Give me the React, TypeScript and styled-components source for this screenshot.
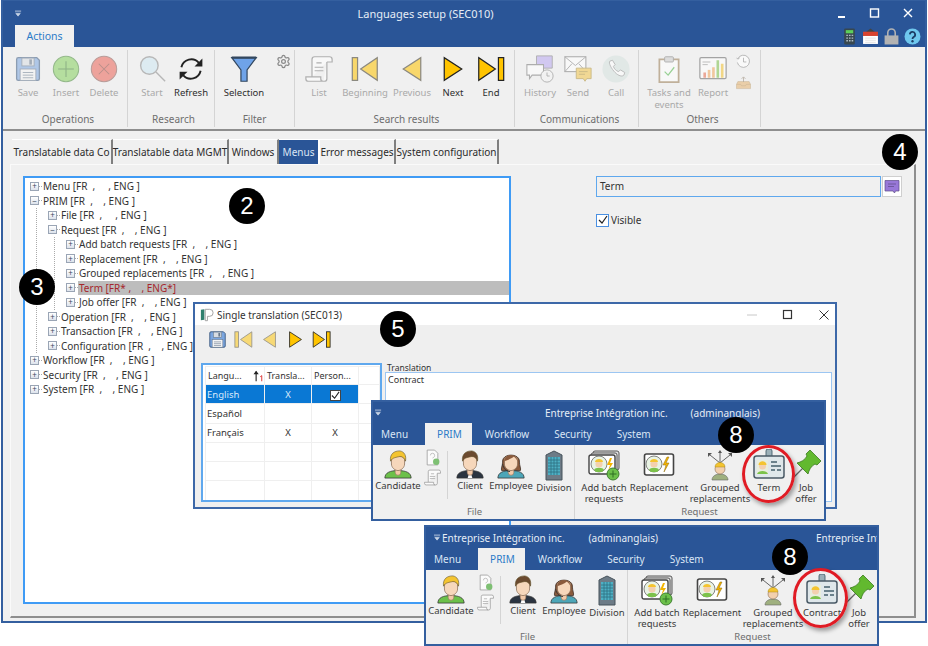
import { ReactNode } from 'react';
import styled, { createGlobalStyle } from 'styled-components';
import { Settings } from 'lucide-react';

const BLUE = '#2a5597';
const FONT = '"Noto Sans", "Open Sans", sans-serif';

//****************** icons ******************//

type IconProps = { size?: number };

function Svg({ size = 28, children }: IconProps & { children: ReactNode }) {
  return (
    <svg width={size} height={size} viewBox="0 0 32 32">
      {children}
    </svg>
  );
}

const SaveIcon = ({ size }: IconProps) => (
  <Svg size={size}>
    <path d="M3 5a2 2 0 0 1 2-2h21l3 3v21a2 2 0 0 1-2 2H5a2 2 0 0 1-2-2z" fill="#7ba6e0" stroke="#3c5a80" strokeWidth="1.5" />
    <rect x="9" y="3.5" width="14" height="9" fill="#d8dde3" stroke="#66778c" />
    <rect x="17.5" y="5" width="3" height="6" fill="#66778c" />
    <rect x="7" y="16" width="18" height="13" fill="#f5f5f5" stroke="#66778c" />
    <path d="M10 20h12M10 23h12M10 26h12" stroke="#66778c" />
  </Svg>
);

const PlusIcon = ({ size }: IconProps) => (
  <Svg size={size}>
    <circle cx="16" cy="16" r="14.5" fill="#86d05e" stroke="#4a8c3a" strokeWidth="1.2" />
    <path d="M16 7v18M7 16h18" stroke="#3f7f31" strokeWidth="1.2" />
  </Svg>
);

const CrossIcon = ({ size }: IconProps) => (
  <Svg size={size}>
    <circle cx="16" cy="16" r="14.5" fill="#ec6457" stroke="#8d5a54" strokeWidth="1.2" />
    <path d="M10 10l12 12M22 10L10 22" stroke="#8d4038" strokeWidth="1.2" />
  </Svg>
);

const SearchIcon = ({ size }: IconProps) => (
  <Svg size={size}>
    <circle cx="13" cy="12" r="10" fill="#cfe7f2" stroke="#8a8a8a" strokeWidth="1.6" />
    <path d="M20.5 19.5L31 30" stroke="#8a8a8a" strokeWidth="1.6" />
  </Svg>
);

const RefreshIcon = ({ size }: IconProps) => (
  <Svg size={size}>
    <path d="M5 14a11.5 11.5 0 0 1 20-5" fill="none" stroke="#222" strokeWidth="2.2" />
    <path d="M29 4v9h-9z" fill="#222" />
    <path d="M27 18a11.5 11.5 0 0 1-20 5" fill="none" stroke="#222" strokeWidth="2.2" />
    <path d="M3 28v-9h9z" fill="#222" />
  </Svg>
);

const FunnelIcon = ({ size }: IconProps) => (
  <Svg size={size}>
    <path d="M2 3h28L19.5 17v13h-7V17z" fill="#6fa3e8" stroke="#33475e" strokeWidth="1.4" />
    <path d="M2 3h28" stroke="#33475e" strokeWidth="2.6" />
  </Svg>
);

const ListIcon = ({ size }: IconProps) => (
  <Svg size={size}>
    <path d="M8 25V5a3 3 0 0 1 3-3h17a3 3 0 0 1 3 3v3h-6" fill="#fff" stroke="#7c7c7c" strokeWidth="1.4" />
    <path d="M25 8V27a3 3 0 0 1-3 3H4a3 3 0 0 1-3-3v-2h17v2a3 3 0 0 0 3 3" fill="#fff" stroke="#7c7c7c" strokeWidth="1.4" />
    <path d="M13 9h6M11 14h10M11 18h10" stroke="#7c7c7c" strokeWidth="1.2" />
  </Svg>
);

const FirstIcon = ({ size }: IconProps) => (
  <Svg size={size}>
    <rect x="1.5" y="3" width="6" height="26" fill="#ffc400" stroke="#3a3524" strokeWidth="1.4" />
    <path d="M30 3v26L11 16z" fill="#ffc400" stroke="#3a3524" strokeWidth="1.4" />
  </Svg>
);

const PrevIcon = ({ size }: IconProps) => (
  <Svg size={size}>
    <path d="M26 3v26L6 16z" fill="#ffc400" stroke="#3a3524" strokeWidth="1.4" />
  </Svg>
);

const NextIcon = ({ size }: IconProps) => (
  <Svg size={size}>
    <path d="M6 3v26l20-13z" fill="#ffc400" stroke="#222" strokeWidth="1.4" />
  </Svg>
);

const LastIcon = ({ size }: IconProps) => (
  <Svg size={size}>
    <path d="M2 3v26l19-13z" fill="#ffc400" stroke="#222" strokeWidth="1.4" />
    <rect x="24.5" y="3" width="6" height="26" fill="#ffc400" stroke="#222" strokeWidth="1.4" />
  </Svg>
);

const HistoryIcon = ({ size }: IconProps) => (
  <Svg size={size}>
    <path d="M12 1h18v14H16l-4 0z" fill="#b9a8f0" stroke="#777" />
    <path d="M1 11h19v12H7l-3 4v-4H1z" fill="#fff" stroke="#777" strokeWidth="1.2" />
    <circle cx="24" cy="24" r="7" fill="#f4f4f4" stroke="#777" />
    <path d="M24 20v4h3" fill="none" stroke="#777" />
  </Svg>
);

const SendIcon = ({ size }: IconProps) => (
  <Svg size={size}>
    <rect x="1" y="2" width="24" height="17" fill="#fff" stroke="#777" strokeWidth="1.2" />
    <path d="M1 2l12 10L25 2M1 19l8-9M25 19l-8-9" fill="none" stroke="#777" />
    <path d="M14 15h17v12h-5l-2 3-2-3h-8z" fill="#f2c64a" stroke="#a88a30" />
    <path d="M17 19h10M17 22h7" stroke="#a88a30" />
  </Svg>
);

const CallIcon = ({ size }: IconProps) => (
  <Svg size={size}>
    <circle cx="16" cy="16" r="15.5" fill="#d5e2df" />
    <path d="M9 7l3-1 3 5-2 2c1 3 3 5 6 6l2-2 5 3-1 3c-2 2-6 1-10-3S7 9 9 7z" fill="#fff" stroke="#888" />
  </Svg>
);

const TasksIcon = ({ size }: IconProps) => (
  <Svg size={size}>
    <rect x="5" y="5" width="22" height="26" fill="#fff" stroke="#9a7d55" strokeWidth="2" />
    <rect x="11" y="2" width="10" height="6" rx="1" fill="#ccc" stroke="#777" />
    <path d="M11 19l4 4 7-9" fill="none" stroke="#50b848" strokeWidth="1.4" />
  </Svg>
);

const ReportIcon = ({ size }: IconProps) => (
  <Svg size={size}>
    <rect x="1" y="3" width="30" height="24" rx="1.5" fill="#fff" stroke="#666" strokeWidth="1.4" />
    <path d="M4 8h9M4 11h6" stroke="#888" />
    <rect x="5" y="20" width="3" height="6" fill="#e76f51" />
    <rect x="10" y="17" width="3" height="9" fill="#f2a65a" />
    <rect x="15" y="14" width="3" height="12" fill="#f2a65a" />
    <rect x="20" y="6" width="3" height="20" fill="#7cc24a" />
    <rect x="25" y="10" width="3" height="16" fill="#f4c430" />
  </Svg>
);

const ClockIcon = ({ size }: IconProps) => (
  <Svg size={size}>
    <path d="M4 10a13 13 0 1 1-1 8" fill="#fff" stroke="#777" strokeWidth="1.6" />
    <path d="M16 8v9h6M1 8l3 3 4-3" fill="none" stroke="#777" strokeWidth="1.6" />
  </Svg>
);

const TrayIcon = ({ size }: IconProps) => (
  <Svg size={size}>
    <path d="M4 14h24l3 6v9H1v-9z" fill="#e7b97a" stroke="#a98755" />
    <path d="M1 20h9l2 3h8l2-3h9" fill="none" stroke="#a98755" />
    <path d="M16 15V5M12 8l4-4 4 4" fill="none" stroke="#8a7a66" strokeWidth="1.6" />
  </Svg>
);

const CalculatorIcon = () => (
  <Svg size={17}>
    <rect x="6" y="1" width="20" height="30" rx="2" fill="#37474f" />
    <rect x="9" y="4" width="14" height="6" fill="#5dd05a" />
    <path d="M10 14h3M15 14h3M20 14h3M10 19h3M15 19h3M20 19h3M10 24h3M15 24h3M20 24h3" stroke="#b0bec5" strokeWidth="2.4" />
  </Svg>
);

const CalendarIcon = () => (
  <Svg size={17}>
    <path d="M16 1L25 8H7z" fill="#444" />
    <rect x="2" y="7" width="28" height="8" fill="#d9432f" />
    <rect x="2" y="15" width="28" height="15" fill="#fff" />
    <path d="M6 19h20M6 23h20M6 27h20" stroke="#ccc" />
  </Svg>
);

const LockIcon = () => (
  <Svg size={17}>
    <path d="M9 15V9a7 7 0 0 1 14 0v6" fill="none" stroke="#b3b3b3" strokeWidth="3" />
    <rect x="3" y="14" width="26" height="17" fill="#b3b3b3" />
  </Svg>
);

const HelpIcon = () => (
  <Svg size={17}>
    <circle cx="16" cy="16" r="15" fill="#6fc8ee" />
    <path d="M11 12a5 5 0 1 1 7 5c-1.5 1-2 2-2 3.500" fill="none" stroke="#1c3d66" strokeWidth="3.4" />
    <circle cx="16" cy="25" r="2.200" fill="#1c3d66" />
  </Svg>
);

const BubbleIcon = () => (
  <Svg size={16}>
    <path d="M2 3h28v21h-7l-2 4-3-4H2z" fill="#9878d8" stroke="#5b4a86" strokeWidth="1.4" />
    <path d="M8 10h16M8 15h12" stroke="#5b4a86" strokeWidth="1.4" />
  </Svg>
);

const AppMark = () => (
  <Svg size={14}>
    <path d="M2 4l8-1v24l-8 1z" fill="#2f7f6d" />
    <path d="M12 3h10a8 8 0 0 1 0 16h-5v10h-5z" fill="#fff" stroke="#999" strokeWidth="2" />
  </Svg>
);

const SortMark = () => (
  <Svg size={12}>
    <path d="M11 4v26" stroke="#222" strokeWidth="3" />
    <path d="M4 11l7-9 7 9z" fill="#222" />
    <path d="M22 18l4-3v15" fill="none" stroke="#d33" strokeWidth="2.6" />
  </Svg>
);

// one bust, hair and clothes change from one person to the next
function Person({ hair, clothes, long, tie, headset, size = 30 }: { hair: string; clothes: string; long?: boolean; tie?: boolean; headset?: boolean; size?: number }) {
  return (
    <Svg size={size}>
      {long && <path d="M7 14C6 4 26 4 25 14c0 4 2 7 1 9H6c-1-2 1-5 1-9z" fill={hair} stroke="#3a2a20" strokeWidth=".8" />}
      <path d="M2 31c0-6 6-8 14-8s14 2 14 8z" fill={clothes} stroke="#333" strokeWidth=".8" />
      {tie && <path d="M13 23h6l-2 3 1.500 5h-5L15 26z" fill="#fff" />}
      <path d="M13 20h6v5a3 3 0 0 1-6 0z" fill="#f2c9a8" stroke="#8a6d55" strokeWidth=".6" />
      <path d="M9 11c0-5 14-5 14 0v5c0 4-4 7-7 7s-7-3-7-7z" fill="#f6d7bb" stroke="#8a6d55" strokeWidth=".8" />
      {!long && <path d="M8 13C7 5 12 2 18 2c5 1 7 5 6 11-1-3-3-5-6-5-4 1-8 1-10 5z" fill={hair} stroke="#5a4a20" strokeWidth=".6" />}
      {long && <path d="M9 13c3-1 8-3 10-5 2 2 3 3 4 5 0-8-14-9-14 0z" fill={hair} />}
      {headset && <path d="M7 16c1 5 4 8 8 8" fill="none" stroke="#333" strokeWidth="1" />}
    </Svg>
  );
}

const BuildingIcon = () => (
  <Svg size={32}>
    <path d="M8 6l8-4 8 4v25H8z" fill="#6d7b86" stroke="#47525b" />
    <rect x="10" y="8" width="12" height="18" fill="#4eb0c4" />
    <path d="M10 11h12M10 14h12M10 17h12M10 20h12M10 23h12M13 8v18M16 8v18M19 8v18" stroke="#2f6f80" strokeWidth=".8" />
  </Svg>
);

const Worker = () => (
  <>
    <circle cx="11" cy="15" r="8" fill="#e9f3e4" stroke="#666" strokeWidth=".8" />
    <path d="M6 21c1-3 9-3 10 0l-2 2H8z" fill="#7cc24a" />
    <circle cx="11" cy="15" r="3.600" fill="#f3d0ae" />
    <path d="M7 13c0-4 8-4 8 0z" fill="#f4c430" />
  </>
);

const ReplacementIcon = () => (
  <Svg size={32}>
    <rect x="1.500" y="5" width="29" height="21" rx="2" fill="#fff" stroke="#444" strokeWidth="1.6" />
    <Worker />
    <path d="M24 8l-4 8h3l-2 7 5-9h-3l3-6z" fill="#f4b400" stroke="#8a6a10" strokeWidth=".5" />
  </Svg>
);

const BatchIcon = () => (
  <Svg size={32}>
    <rect x="5" y="2" width="26" height="19" rx="2" fill="#ddd" stroke="#555" />
    <rect x="3" y="4" width="26" height="19" rx="2" fill="#eee" stroke="#555" />
    <rect x="1" y="6" width="26" height="19" rx="2" fill="#fff" stroke="#444" strokeWidth="1.400" />
    <Worker />
    <path d="M22 9l-3 7h3l-2 6 5-8h-3l2-5z" fill="#f4b400" />
    <circle cx="25" cy="25" r="6" fill="#6cc04a" stroke="#3f7f31" />
    <path d="M25 21.500v7M21.500 25h7" stroke="#2f6f25" />
  </Svg>
);

const GroupedIcon = () => (
  <Svg size={32}>
    <path d="M16 14V3M16 14L6 6M16 14L26 6" stroke="#555" strokeWidth=".9" />
    <path d="M14 4l2-3 2 3zM4 8l0-4 4 0zM28 8l0-4-4 0z" fill="#555" />
    <path d="M8 31c0-4 4-6 8-6s8 2 8 6z" fill="#9fb07f" stroke="#666" strokeWidth=".6" />
    <circle cx="16" cy="20" r="5" fill="#f3d0ae" stroke="#8a6d55" strokeWidth=".6" />
    <path d="M11 18c0-6 10-6 10 0z" fill="#f4c430" stroke="#a98a20" strokeWidth=".5" />
  </Svg>
);

const BadgeCardIcon = () => (
  <Svg size={32}>
    <rect x="13" y="0" width="6" height="9" rx="2" fill="#9bb0b8" stroke="#46606c" strokeWidth=".9" />
    <rect x="1" y="7" width="30" height="22" rx="2.500" fill="#dfe7ea" stroke="#4a5a66" strokeWidth="1.500" />
    <rect x="4" y="11" width="11" height="14" fill="#e8eddc" />
    <circle cx="9.500" cy="17" r="3.500" fill="#f3d0ae" />
    <path d="M5.500 16c0-5 8-5 8 0z" fill="#f4c430" />
    <path d="M4 25c1-4 10-4 11 0z" fill="#7cc24a" />
    <path d="M18 13h6M18 17h10M18 21h4M24 21h4" stroke="#46606c" strokeWidth="1.300" />
  </Svg>
);

const PinIcon = () => (
  <Svg size={32}>
    <path d="M14 18L2 30" stroke="#666" strokeWidth="1.200" />
    <path d="M7 14c4-1 8-3 10-7l-1-2 4-4 11 11-4 4-2-1c-4 2-6 6-7 10z" fill="#62b92f" stroke="#3a7a1e" strokeWidth=".8" />
  </Svg>
);

const ClientDoc = () => (
  <Svg size={17}>
    <path d="M6 2h14l6 6v22H6z" fill="#fff" stroke="#777" strokeWidth="1.400" />
    <path d="M12 12a4 4 0 0 1 8 0c0 2-1 4-4 5" fill="none" stroke="#777" />
    <circle cx="23" cy="24" r="6" fill="#59b04a" />
  </Svg>
);

const MiniScroll = () => <ListIcon size={17} />;

//****************** data ******************//

type TreeItem = { label: string; selected?: boolean; open?: boolean; items?: TreeItem[] };

const TREE: TreeItem[] = [
  { label: 'Menu [FR  ,     , ENG ]' },
  {
    label: 'PRIM [FR  ,    , ENG ]',
    open: true,
    items: [
      { label: 'File [FR  ,     , ENG ]' },
      {
        label: 'Request [FR  ,    , ENG ]',
        open: true,
        items: [
          { label: 'Add batch requests [FR  ,    , ENG ]' },
          { label: 'Replacement [FR  ,    , ENG ]' },
          { label: 'Grouped replacements [FR  ,    , ENG ]' },
          { label: 'Term [FR* ,    , ENG*]', selected: true },
          { label: 'Job offer [FR  ,    , ENG ]' },
        ],
      },
      { label: 'Operation [FR  ,    , ENG ]' },
      { label: 'Transaction [FR  ,    , ENG ]' },
      { label: 'Configuration [FR  ,    , ENG ]' },
    ],
  },
  { label: 'Workflow [FR  ,    , ENG ]' },
  { label: 'Security [FR  ,    , ENG ]' },
  { label: 'System [FR  ,    , ENG ]' },
];

const PAGE_TABS = [
  { label: 'Translatable data Co', width: 101 },
  { label: 'Translatable data MGMT', width: 116 },
  { label: 'Windows', width: 50 },
  { label: 'Menus', width: 41, active: true },
  { label: 'Error messages', width: 76 },
  { label: 'System configuration', width: 103 },
];

const LANGUAGES = [
  { name: 'English', translated: 'X', personal: 'check', selected: true },
  { name: 'Español', translated: '', personal: '' },
  { name: 'Français', translated: 'X', personal: 'X' },
  { name: '', translated: '', personal: '' },
  { name: '', translated: '', personal: '' },
  { name: '', translated: '', personal: '' },
];

//****************** small parts ******************//

function RibbonButton({ width, label, disabled, children }: { width: number; label: ReactNode; disabled?: boolean; children: ReactNode }) {
  return (
    <ToolButton $width={width} $disabled={disabled}>
      <ToolIcon $disabled={disabled}>{children}</ToolIcon>
      <span>{label}</span>
    </ToolButton>
  );
}

function TreeNode({ item }: { item: TreeItem }) {
  return (
    <li>
      <TreeRow>
        <Expander>{item.open ? '−' : '+'}</Expander>
        <Dash />
        <TreeLabel $selected={item.selected}>{item.label}</TreeLabel>
      </TreeRow>
      {item.items && (
        <Branch>
          {item.items.map((child) => (
            <TreeNode key={child.label} item={child} />
          ))}
        </Branch>
      )}
    </li>
  );
}

function WindowControls() {
  return (
    <Controls>
      <svg width="12" height="12" viewBox="0 0 12 12"><rect x="2" y="9" width="7" height="2" fill="#fff" /></svg>
      <svg width="12" height="12" viewBox="0 0 12 12"><rect x="1.500" y="2" width="8" height="8" fill="none" stroke="#fff" strokeWidth="1.400" /></svg>
      <svg width="12" height="12" viewBox="0 0 12 12"><path d="M2 2l8 8M10 2l-8 8" stroke="#fff" strokeWidth="1.400" /></svg>
    </Controls>
  );
}

const QuickMark = () => (
  <QuickIcon viewBox="0 0 8 8" width="7" height="7">
    <path d="M0 0h7M0 2h7M1 4h5L3.500 7z" stroke="#c7d4e6" strokeWidth=".8" fill="#c7d4e6" />
  </QuickIcon>
);

function MiniRibbon({ left, top, header, term }: { left: number; top: number; header: ReactNode; term: string }) {
  return (
    <MiniWindow style={{ left, top }}>
      <MiniHead>{header}</MiniHead>
      <MiniTabs>
        <MiniTab>Menu</MiniTab>
        <MiniTab $active>PRIM</MiniTab>
        <MiniTab>Workflow</MiniTab>
        <MiniTab>Security</MiniTab>
        <MiniTab>System</MiniTab>
      </MiniTabs>
      <MiniBody>
        <MiniGroup $width={202} $pad={2}>
          <MiniRow>
            <MiniButton $width={46}><Person hair="#f4c430" clothes="#6cc04a" /><span>Candidate</span></MiniButton>
            <MiniSide><ClientDoc /><MiniScroll /></MiniSide>
            <MiniDivider />
            <MiniButton $width={36}><Person hair="#6b4a2f" clothes="#2b3440" tie /><span>Client</span></MiniButton>
            <MiniButton $width={46}><Person hair="#8a5a3c" clothes="#4da6b8" long headset /><span>Employee</span></MiniButton>
            <MiniButton $width={40}><BuildingIcon /><span>Division</span></MiniButton>
          </MiniRow>
          <MiniLabel>File</MiniLabel>
        </MiniGroup>
        <MiniGroup $width={249} $pad={0} $last>
          <MiniRow>
            <MiniButton $width={58}><BatchIcon /><span>Add batch<br />requests</span></MiniButton>
            <MiniButton $width={52}><ReplacementIcon /><span>Replacement</span></MiniButton>
            <MiniButton $width={70}><GroupedIcon /><span>Grouped<br />replacements</span></MiniButton>
            <MiniButton $width={28}><BadgeCardIcon /><span>{term}</span></MiniButton>
            <MiniButton $width={46}><PinIcon /><span>Job<br />offer</span></MiniButton>
          </MiniRow>
          <MiniLabel>Request</MiniLabel>
        </MiniGroup>
      </MiniBody>
    </MiniWindow>
  );
}

//****************** page ******************//

export default function App() {
  return (
    <Stage>
      <GlobalStyle />
      <MainWindow>
        <TitleBar>
          <TitleRow>
            <QuickArea><QuickMark /></QuickArea>
            <TitleText>Languages setup (SEC010)</TitleText>
            <WindowControls />
          </TitleRow>
          <TabRow>
            <AppTab>Actions</AppTab>
            <StatusIcons>
              <CalculatorIcon />
              <CalendarIcon />
              <LockIcon />
              <HelpIcon />
            </StatusIcons>
          </TabRow>
        </TitleBar>

        <Ribbon>
          <RibbonGroup $width={125} $pad={6}>
            <RibbonRow>
              <RibbonButton width={38} label="Save" disabled><SaveIcon /></RibbonButton>
              <RibbonButton width={38} label="Insert" disabled><PlusIcon /></RibbonButton>
              <RibbonButton width={38} label="Delete" disabled><CrossIcon /></RibbonButton>
            </RibbonRow>
            <GroupLabel>Operations</GroupLabel>
          </RibbonGroup>
          <RibbonGroup $width={87} $pad={5}>
            <RibbonRow>
              <RibbonButton width={38} label="Start" disabled><SearchIcon /></RibbonButton>
              <RibbonButton width={40} label="Refresh"><RefreshIcon /></RibbonButton>
            </RibbonRow>
            <GroupLabel>Research</GroupLabel>
          </RibbonGroup>
          <RibbonGroup $width={80} $pad={0}>
            <RibbonRow>
              <RibbonButton width={58} label="Selection"><FunnelIcon /></RibbonButton>
              <SideStack>
                <Settings size={15} color="#8a8a8a" />
              </SideStack>
            </RibbonRow>
            <GroupLabel>Filter</GroupLabel>
          </RibbonGroup>
          <RibbonGroup $width={220} $pad={4}>
            <RibbonRow>
              <RibbonButton width={40} label="List" disabled><ListIcon /></RibbonButton>
              <RibbonButton width={52} label="Beginning" disabled><FirstIcon /></RibbonButton>
              <RibbonButton width={42} label="Previous" disabled><PrevIcon /></RibbonButton>
              <RibbonButton width={40} label="Next"><NextIcon /></RibbonButton>
              <RibbonButton width={36} label="End"><LastIcon /></RibbonButton>
            </RibbonRow>
            <GroupLabel>Search results</GroupLabel>
          </RibbonGroup>
          <RibbonGroup $width={124} $pad={6}>
            <RibbonRow>
              <RibbonButton width={38} label="History" disabled><HistoryIcon /></RibbonButton>
              <RibbonButton width={38} label="Send" disabled><SendIcon /></RibbonButton>
              <RibbonButton width={38} label="Call" disabled><CallIcon /></RibbonButton>
            </RibbonRow>
            <GroupLabel>Communications</GroupLabel>
          </RibbonGroup>
          <RibbonGroup $width={122} $pad={6}>
            <RibbonRow>
              <RibbonButton width={48} label={<>Tasks and<br />events</>} disabled><TasksIcon /></RibbonButton>
              <RibbonButton width={40} label="Report" disabled><ReportIcon /></RibbonButton>
              <SideStack $faded>
                <ClockIcon size={15} />
                <TrayIcon size={15} />
              </SideStack>
            </RibbonRow>
            <GroupLabel>Others</GroupLabel>
          </RibbonGroup>
        </Ribbon>

        <Content>
          <PageTabs>
            {PAGE_TABS.map((tab) => (
              <PageTab key={tab.label} $width={tab.width} $active={tab.active}>{tab.label}</PageTab>
            ))}
          </PageTabs>
          <Panel>
            <TreeBox>
              <Tree>
                {TREE.map((item) => (
                  <TreeNode key={item.label} item={item} />
                ))}
              </Tree>
            </TreeBox>
            <Details>
              <TermRow>
                <TermInput>Term</TermInput>
                <TermButton><BubbleIcon /></TermButton>
              </TermRow>
              <VisibleRow>
                <CheckBox>
                  <svg width="10" height="10" viewBox="0 0 10 10"><path d="M1 5l3 3 5-7" fill="none" stroke="#222" strokeWidth="1.200" /></svg>
                </CheckBox>
                Visible
              </VisibleRow>
            </Details>
          </Panel>
        </Content>
      </MainWindow>

      <Dialog>
        <DialogTitle>
          <AppMark />
          <span>Single translation (SEC013)</span>
          <DialogControls>
            <svg width="12" height="12" viewBox="0 0 12 12"><path d="M1 6h10" stroke="#c8c8c8" /></svg>
            <svg width="12" height="12" viewBox="0 0 12 12"><rect x="1.500" y="1.500" width="8" height="8" fill="none" stroke="#333" strokeWidth="1.200" /></svg>
            <svg width="12" height="12" viewBox="0 0 12 12"><path d="M1.500 1.500l9 9M10.500 1.500l-9 9" stroke="#333" /></svg>
          </DialogControls>
        </DialogTitle>
        <DialogBar>
          <SaveIcon size={19} />
          <Dim><FirstIcon size={19} /></Dim>
          <Dim><PrevIcon size={19} /></Dim>
          <NextIcon size={19} />
          <LastIcon size={19} />
        </DialogBar>
        <DialogBody>
          <GridBox>
            <Grid>
              <thead>
                <tr>
                  <th><HeadCell>Langu...<SortMark /></HeadCell></th>
                  <th>Transla...</th>
                  <th>Person...</th>
                  <th />
                </tr>
              </thead>
              <tbody>
                {LANGUAGES.map((row, i) => (
                  <GridRow key={i} $selected={row.selected}>
                    <td>{row.name}</td>
                    <CenterCell>{row.translated}</CenterCell>
                    <CenterCell>
                      {row.personal === 'check' ? (
                        <GridCheck>
                          <svg width="9" height="9" viewBox="0 0 10 10"><path d="M1 5l3 3 5-7" fill="none" stroke="#222" strokeWidth="1.200" /></svg>
                        </GridCheck>
                      ) : (
                        row.personal
                      )}
                    </CenterCell>
                    <BlankCell />
                  </GridRow>
                ))}
              </tbody>
            </Grid>
          </GridBox>
          <TranslationCol>
            <TranslationLabel>Translation</TranslationLabel>
            <TranslationBox>Contract</TranslationBox>
          </TranslationCol>
        </DialogBody>
      </Dialog>

      <MiniRibbon
        left={371}
        top={400}
        term="Term"
        header={
          <CenteredHead>
            <QuickMark />
            <HeadLeft>Entreprise Intégration inc.</HeadLeft>
            <span>(adminanglais)</span>
          </CenteredHead>
        }
      />
      <MiniRibbon
        left={424}
        top={525}
        term="Contract"
        header={
          <LeftHead>
            <QuickMark />
            <HeadFirst>Entreprise Intégration inc.</HeadFirst>
            <span>(adminanglais)</span>
            <HeadRight>Entreprise Intégration inc.</HeadRight>
          </LeftHead>
        }
      />

      <RedRing style={{ left: 742, top: 445, width: 53, height: 58 }} />
      <RedRing style={{ left: 793, top: 568, width: 55, height: 60 }} />

      <Marker style={{ left: 229, top: 188 }}>2</Marker>
      <Marker style={{ left: 19, top: 269 }}>3</Marker>
      <Marker style={{ left: 882, top: 134 }}>4</Marker>
      <Marker style={{ left: 380, top: 311 }}>5</Marker>
      <Marker style={{ left: 718, top: 417 }}>8</Marker>
      <Marker style={{ left: 772, top: 539 }}>8</Marker>
    </Stage>
  );
}

//****************************************************//

const GlobalStyle = createGlobalStyle`
  html, body {
    margin: 0;
    padding: 0;
    background: #fff;
  }
  * {
    box-sizing: border-box;
  }
`;

const Stage = styled.div`
  position: relative;
  width: 928px;
  height: 646px;
  overflow: hidden;
  background: #fff;
  font-family: ${FONT};
  font-size: 10px;
  color: #333;
`;

const MainWindow = styled.div`
  margin-left: 1px;
  width: 926px;
  height: 623px;
  border: 2px solid #345f9f;
  border-top: 1px solid #345f9f;
  display: flex;
  flex-direction: column;
  background: #f0f0f0;
`;

const TitleBar = styled.div`
  background: ${BLUE};
  height: 46px;
  flex: none;
  display: flex;
  flex-direction: column;
`;

const TitleRow = styled.div`
  display: flex;
  align-items: center;
  height: 24px;
`;

const QuickArea = styled.div`
  width: 18px;
  padding-left: 12px;
  display: flex;
`;

const QuickIcon = styled.svg`
  flex: none;
`;

const TitleText = styled.div`
  flex: 1;
  text-align: center;
  color: #e6edf6;
  font-size: 11px;
`;

const Controls = styled.div`
  width: 95px;
  display: flex;
  justify-content: flex-end;
  gap: 21px;
  padding-right: 11px;
`;

const TabRow = styled.div`
  display: flex;
  justify-content: space-between;
  align-items: flex-end;
  flex: 1;
  padding: 0 4px 0 12px;
`;

const AppTab = styled.div`
  width: 59px;
  height: 22px;
  background: #f0f0f0;
  color: #2b7bc8;
  font-size: 10.5px;
  display: flex;
  align-items: center;
  justify-content: center;
`;

const StatusIcons = styled.div`
  display: flex;
  gap: 4px;
  align-items: center;
  height: 22px;
`;

const Ribbon = styled.div`
  flex: none;
  height: 84px;
  display: flex;
  background: #f0f0f0;
  border-bottom: 2px solid #8e8e8e;
  padding-bottom: 2px;
`;

const RibbonGroup = styled.div<{ $width: number; $pad: number }>`
  width: ${(p) => p.$width}px;
  flex: none;
  margin-top: 3px;
  padding-left: ${(p) => p.$pad}px;
  border-right: 1px solid #d4d4d4;
  display: flex;
  flex-direction: column;
  align-items: flex-start;
`;

const RibbonRow = styled.div`
  display: flex;
  flex: 1;
`;

const GroupLabel = styled.div`
  align-self: stretch;
  text-align: center;
  color: #6e6e6e;
  font-size: 10px;
  line-height: 14px;
  padding-bottom: 1px;
`;

const ToolButton = styled.div<{ $width: number; $disabled?: boolean }>`
  width: ${(p) => p.$width}px;
  display: flex;
  flex-direction: column;
  align-items: center;
  text-align: center;
  white-space: nowrap;
  font-size: 9.5px;
  line-height: 12px;
  padding-top: 5px;
  color: ${(p) => (p.$disabled ? '#a9a9a9' : '#2e2e2e')};

  span {
    display: block;
  }
`;

const ToolIcon = styled.div<{ $disabled?: boolean }>`
  height: 32px;
  display: flex;
  align-items: flex-start;
  opacity: ${(p) => (p.$disabled ? 0.55 : 1)};
`;

const SideStack = styled.div<{ $faded?: boolean }>`
  display: flex;
  flex-direction: column;
  gap: 6px;
  padding-top: 4px;
  width: 20px;
  align-items: center;
  opacity: ${(p) => (p.$faded ? 0.6 : 1)};
`;

const Content = styled.div`
  flex: 1;
  display: flex;
  flex-direction: column;
  padding: 8px 9px 3px 7px;
  min-height: 0;
`;

const PageTabs = styled.div`
  display: flex;
  padding-left: 2px;
  height: 25px;
  flex: none;
`;

const PageTab = styled.div<{ $width: number; $active?: boolean }>`
  width: ${(p) => p.$width}px;
  flex: none;
  display: flex;
  align-items: center;
  justify-content: center;
  white-space: nowrap;
  font-size: 10px;
  color: ${(p) => (p.$active ? '#dbe6f5' : '#2b2b2b')};
  background: ${(p) => (p.$active ? BLUE : '#f0f0f0')};
  border-top: 1px solid #fff;
  border-right: 2px solid ${(p) => (p.$active ? '#fff' : '#7f7f7f')};
`;

const Panel = styled.div`
  flex: 1;
  display: flex;
  min-height: 0;
  border-top: 1px solid #fafafa;
  border-left: 1px solid #fafafa;
  border-right: 2px solid #8e8e8e;
  border-bottom: 2px solid #8e8e8e;
  padding: 11px 15px 12px 12px;
  gap: 85px;
`;

const TreeBox = styled.div`
  width: 488px;
  flex: none;
  background: #fff;
  border: 2px solid #3f9bf5;
  padding-top: 1px;
`;

const Tree = styled.ul`
  list-style: none;
  margin: 0;
  padding: 0 0 0 6px;
`;

const Branch = styled.ul`
  list-style: none;
  margin: 0 0 0 5px;
  padding: 0 0 0 12px;
  border-left: 1px dotted #aaa;
`;

const TreeRow = styled.div`
  display: flex;
  align-items: center;
  height: 14.5px;
`;

const Expander = styled.span`
  width: 9px;
  height: 9px;
  flex: none;
  display: flex;
  align-items: center;
  justify-content: center;
  background: linear-gradient(#fff, #dde3ec);
  border: 1px solid #9aa5b5;
  color: #3c4a60;
  font-size: 8px;
  line-height: 1;
  margin-left: -1px;
`;

const Dash = styled.span`
  width: 3px;
  flex: none;
  border-top: 1px dotted #aaa;
`;

const TreeLabel = styled.span<{ $selected?: boolean }>`
  flex: 1;
  height: 14.5px;
  line-height: 14.5px;
  white-space: pre;
  font-size: 10px;
  padding-left: 1px;
  color: ${(p) => (p.$selected ? '#a6262c' : '#333')};
  background: ${(p) => (p.$selected ? '#bdbdbd' : 'transparent')};
`;

const Details = styled.div`
  flex: 1;
  display: flex;
  flex-direction: column;
  gap: 16px;
`;

const TermRow = styled.div`
  display: flex;
  gap: 1px;
  width: 306px;
  height: 21px;
`;

const TermInput = styled.div`
  flex: 1;
  background: #f0f0f0;
  border: 1px solid #5fa8ee;
  color: #333;
  font-size: 10px;
  line-height: 18px;
  padding-left: 3px;
`;

const TermButton = styled.div`
  width: 20px;
  background: #fff;
  border: 1px solid #cfcfcf;
  display: flex;
  align-items: center;
  justify-content: center;
`;

const VisibleRow = styled.div`
  display: flex;
  align-items: center;
  gap: 2px;
  font-size: 10px;
`;

const CheckBox = styled.div`
  width: 13px;
  height: 13px;
  border: 1px solid #4a90e2;
  background: #fff;
  display: flex;
  align-items: center;
  justify-content: center;
`;

const Dialog = styled.div`
  position: absolute;
  left: 193px;
  top: 302px;
  width: 644px;
  height: 207px;
  background: #efefef;
  border: 2px solid #3d68a8;
  display: flex;
  flex-direction: column;
`;

const DialogTitle = styled.div`
  height: 21px;
  flex: none;
  background: #fff;
  display: flex;
  align-items: center;
  gap: 3px;
  padding-left: 5px;
  font-size: 10px;
  color: #333;
`;

const DialogControls = styled.div`
  margin-left: auto;
  display: flex;
  gap: 24px;
  padding-right: 5px;
`;

const DialogBar = styled.div`
  flex: none;
  height: 27px;
  display: flex;
  align-items: center;
  gap: 7px;
  padding: 2px 0 0 13px;
`;

const Dim = styled.div`
  display: flex;
  opacity: 0.5;
`;

const DialogBody = styled.div`
  flex: 1;
  display: flex;
  gap: 3px;
  padding: 11px 3px 5px 6px;
  min-height: 0;
`;

const GridBox = styled.div`
  width: 181px;
  flex: none;
  background: #fff;
  border: 2px solid #5fa8ee;
  padding: 1px 0 0 2px;
  overflow: hidden;
`;

const Grid = styled.table`
  width: 175px;
  table-layout: fixed;
  border-collapse: collapse;
  font-size: 9.5px;
  color: #333;

  th, td {
    height: 19.3px;
    padding: 0 0 0 1px;
    border: 1px solid #efefef;
    font-weight: 400;
    text-align: left;
    white-space: nowrap;
    overflow: hidden;
  }

  th {
    height: 18px;
    padding-left: 2px;
    font-size: 9px;
  }

  th:nth-child(1), td:nth-child(1) {
    width: 59px;
  }
  th:nth-child(2), td:nth-child(2), th:nth-child(3), td:nth-child(3) {
    width: 47px;
  }
`;

const HeadCell = styled.div`
  display: flex;
  align-items: center;
  justify-content: space-between;
`;

const GridRow = styled.tr<{ $selected?: boolean }>`
  td {
    color: ${(p) => (p.$selected ? '#dbeafb' : '#333')};
    background: ${(p) => (p.$selected ? '#0a78d4' : 'transparent')};
  }
`;

const CenterCell = styled.td`
  && {
    text-align: center;
    padding: 0;
  }
`;

const BlankCell = styled.td`
  && {
    background: #fff;
  }
`;

const GridCheck = styled.span`
  display: inline-flex;
  align-items: center;
  justify-content: center;
  width: 11px;
  height: 11px;
  background: #fff;
  border: 1px solid #444;
  vertical-align: middle;
`;

const TranslationCol = styled.div`
  flex: 1;
  display: flex;
  flex-direction: column;
`;

const TranslationLabel = styled.div`
  font-size: 8.5px;
  line-height: 9px;
  margin-top: 0;
  padding-left: 2px;
`;

const TranslationBox = styled.div`
  flex: 1;
  background: #fff;
  border: 1px solid #9cc6f2;
  font-size: 9px;
  line-height: 13px;
  padding-left: 2px;
`;

const MiniWindow = styled.div`
  position: absolute;
  width: 455px;
  height: 121px;
  border: 2px solid #345f9f;
  background: #f0f0f0;
  display: flex;
  flex-direction: column;
`;

const MiniHead = styled.div`
  height: 21px;
  flex: none;
  background: ${BLUE};
  color: #e6edf6;
  font-size: 10px;
  overflow: hidden;
`;

const CenteredHead = styled.div`
  display: flex;
  align-items: center;
  height: 100%;
  padding-left: 2px;
`;

const HeadLeft = styled.span`
  margin-left: 163px;
  margin-right: 23px;
`;

const LeftHead = styled.div`
  display: flex;
  align-items: center;
  height: 100%;
  padding-left: 8px;
  white-space: nowrap;
`;

const HeadFirst = styled.span`
  margin-left: 1px;
  margin-right: 24px;
`;

const HeadRight = styled.span`
  margin-left: 158px;
`;

const MiniTabs = styled.div`
  flex: none;
  height: 22px;
  background: ${BLUE};
  display: flex;
  padding-left: 0;
  align-items: flex-end;
`;

const MiniTab = styled.div<{ $active?: boolean }>`
  height: 22px;
  padding: 0 10px 0 ${(p) => (p.$active ? 12 : 8)}px;
  min-width: 45px;
  display: flex;
  align-items: center;
  justify-content: center;
  font-size: 10px;
  margin-right: ${(p) => (p.$active ? 5 : 7)}px;
  background: ${(p) => (p.$active ? '#f0f0f0' : 'transparent')};
  color: ${(p) => (p.$active ? '#2b7bc8' : '#dbe6f5')};
`;

const MiniBody = styled.div`
  flex: 1;
  display: flex;
  min-height: 0;
`;

const MiniGroup = styled.div<{ $width: number; $pad: number; $last?: boolean }>`
  width: ${(p) => p.$width}px;
  flex: none;
  display: flex;
  flex-direction: column;
  padding-left: ${(p) => p.$pad}px;
  border-right: ${(p) => (p.$last ? 'none' : '1px solid #d4d4d4')};
`;

const MiniRow = styled.div`
  flex: 1;
  display: flex;
  padding-top: 4px;
`;

const MiniButton = styled.div<{ $width: number }>`
  width: ${(p) => p.$width}px;
  flex: none;
  display: flex;
  flex-direction: column;
  align-items: center;
  text-align: center;
  white-space: nowrap;
  font-size: 9.5px;
  line-height: 11px;
  color: #3a3a3a;

  svg {
    flex: none;
  }
  span {
    margin-top: 1px;
  }
`;

const MiniSide = styled.div`
  width: 22px;
  display: flex;
  flex-direction: column;
  align-items: center;
  gap: 3px;
  opacity: 0.75;
`;

const MiniDivider = styled.div`
  width: 1px;
  height: 48px;
  background: #d4d4d4;
  margin: 2px 4px 0 4px;
`;

const MiniLabel = styled.div`
  text-align: center;
  color: #6e6e6e;
  font-size: 9.5px;
  line-height: 12px;
  padding-bottom: 1px;
`;

const RedRing = styled.div`
  position: absolute;
  border: 3px solid #e01b24;
  border-radius: 50%;
  box-shadow: 2px 3px 4px rgba(0, 0, 0, 0.35);
`;

const Marker = styled.div`
  position: absolute;
  width: 36px;
  height: 36px;
  border-radius: 50%;
  background: #000;
  color: #fff;
  font-family: "Liberation Sans", Arial, sans-serif;
  font-size: 24px;
  line-height: 36px;
  text-align: center;
`;
